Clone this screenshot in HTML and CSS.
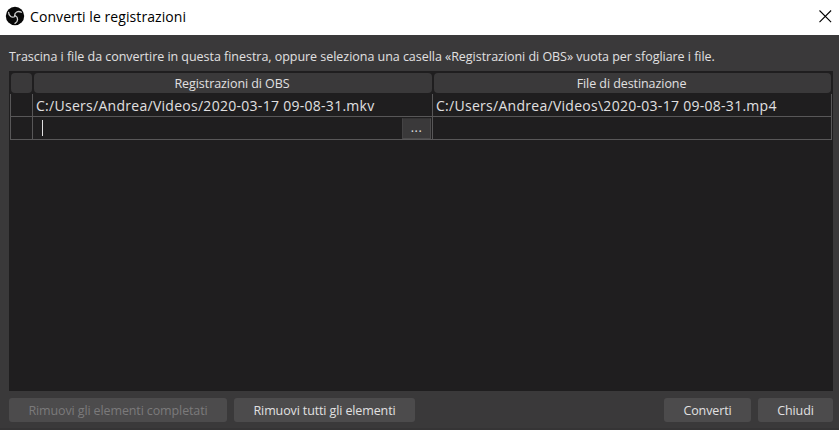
FILE: index.html
```html
<!DOCTYPE html>
<html lang="it">
<head>
<meta charset="utf-8">
<title>Converti le registrazioni</title>
<link rel="stylesheet" href="styles.css">
</head>
<body>
<div class="window">
  <header class="titlebar">
    <svg class="logo" width="20" height="20" viewBox="0 0 20 20">
      <circle cx="10" cy="10" r="9.2" fill="#080808"/>
      <g fill="none" stroke="#d0d0d0" stroke-width="1.3" stroke-linecap="round">
        <path d="M10.4 9.8C13.4 11.4 13.4 15.4 10 17.4"/>
        <path d="M10.4 9.8C13.4 11.4 13.4 15.4 10 17.4" transform="rotate(120 10 10)"/>
        <path d="M10.4 9.8C13.4 11.4 13.4 15.4 10 17.4" transform="rotate(240 10 10)"/>
      </g>
    </svg>
    <h1 class="title">Converti le registrazioni</h1>
    <svg class="close" width="13" height="13" viewBox="0 0 13 13"><path d="M.5.5l11.6 11.6M12.1.5L.5 12.1" stroke="#000" stroke-width="1.1"/></svg>
  </header>
  <main class="content">
    <p class="hint">Trascina i file da convertire in questa finestra, oppure seleziona una casella «Registrazioni di OBS» vuota per sfogliare i file.</p>
    <section class="table">
      <div class="head">
        <div class="th"></div>
        <div class="th">Registrazioni di OBS</div>
        <div class="th">File di destinazione</div>
      </div>
      <div class="rows">
        <div class="row">
          <div class="cell"></div>
          <div class="cell source">C:/Users/Andrea/Videos/2020-03-17 09-08-31.mkv</div>
          <div class="cell target">C:/Users/Andrea/Videos\2020-03-17 09-08-31.mp4</div>
        </div>
        <div class="row">
          <div class="cell"></div>
          <div class="cell editor"><span class="caret"></span><button class="browse">...</button></div>
          <div class="cell"></div>
        </div>
      </div>
    </section>
    <footer class="actions">
      <button class="btn remove-done" disabled>Rimuovi gli elementi completati</button>
      <button class="btn remove-all">Rimuovi tutti gli elementi</button>
      <button class="btn convert">Converti</button>
      <button class="btn dismiss">Chiudi</button>
    </footer>
  </main>
</div>
</body>
</html>
```

FILE: styles.css
```css
* { box-sizing: border-box; }
body { margin: 0; font-family: "Open Sans", "Noto Sans", sans-serif; font-size: 12.5px; color: #e1e0e1; }
.window { width: 839px; height: 430px; display: flex; flex-direction: column; background: #3a393a; overflow: hidden; }
.titlebar { height: 35px; flex: none; display: flex; align-items: center; padding: 0 7px 3px 5px; background: #fff; color: #000; }
.logo { flex: none; }
.title { margin: 0 auto 0 5px; font-size: 14px; font-weight: 400; line-height: 20px; letter-spacing: .08px; padding-top: 1px; }
.close { flex: none; }
.content { flex: 1; display: flex; flex-direction: column; padding: 13px 6px 0 9px; border-bottom: 2px solid #353435; }
.hint { margin: 0 0 6px; height: 17px; line-height: 17px; letter-spacing: -.035px; white-space: nowrap; }
.table { height: 320px; background: #1f1e1f; padding: 2px 1px 0; }
.head { display: grid; grid-template-columns: 23px 400px 399px; width: 822px; margin-left: 1px; height: 20px; }
.th { height: 20px; margin-right: 2px; background: #3a393a; border-radius: 4px; text-align: center; line-height: 22px; letter-spacing: -.07px; }
.th:nth-child(2), .th:nth-child(3) { padding-right: 2px; }
.rows { margin-top: 1px; border-left: 1px solid #585758; width: 822px; }
.row { display: grid; grid-template-columns: 22px 400px 399px; height: 23px; }
.cell { height: 23px; border-right: 1px solid #585758; border-bottom: 1px solid #585758; white-space: nowrap; font-size: 14px; line-height: 24px; letter-spacing: .28px; }
.source, .target { padding-left: 3px; }
.editor { display: flex; align-items: center; justify-content: space-between; padding: 0 1px 0 9px; }
.caret { width: 1px; height: 16px; background: #e1e0e1; }
.browse { width: 29px; height: 21px; padding: 0; border: 1px solid #4c4b4c; border-top-color: #333233; border-left-color: #444344; background: #3a393a; color: #e1e0e1; font: 12.5px/18px "Open Sans", sans-serif; letter-spacing: .5px; }
.actions { display: flex; gap: 7px; padding-top: 7px; }
.btn { height: 24px; padding: 2px 0 0; border: 0; border-radius: 3px; background: #4c4b4c; color: #e1e0e1; font: 12.5px/22px "Open Sans", sans-serif; letter-spacing: -.12px; white-space: nowrap; }
.btn:disabled { color: #7b7a7b; }
.remove-done { width: 218px; }
.remove-all { width: 181px; }
.convert { width: 87px; margin-left: auto; }
.dismiss { width: 75px; }
```
